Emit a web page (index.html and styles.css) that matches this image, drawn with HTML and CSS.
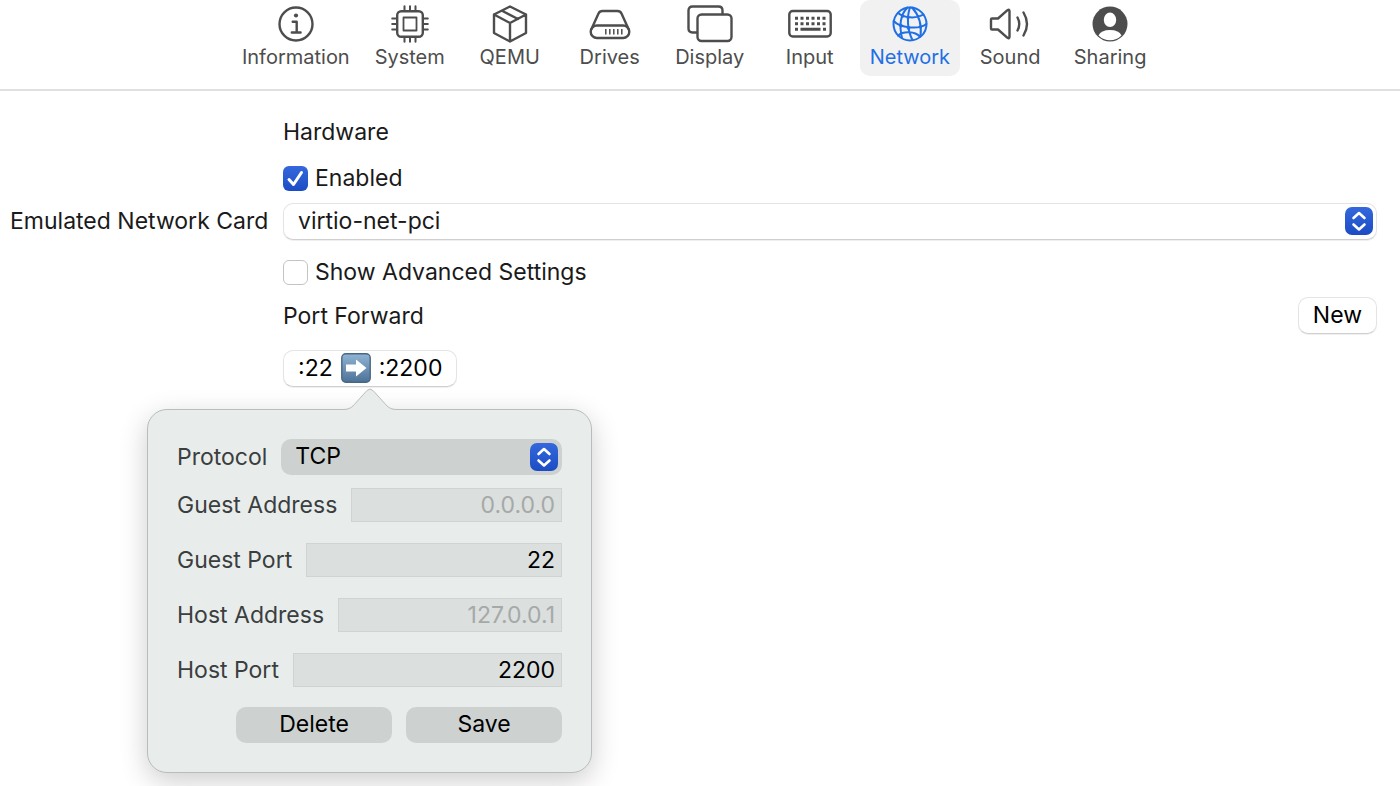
FILE: index.html
```html
<!DOCTYPE html>
<html lang="en">
<head>
<meta charset="utf-8">
<meta name="viewport" content="width=device-width, initial-scale=1">
<title>Network settings</title>
<link rel="stylesheet" href="styles.css">
</head>
<body>
<nav class="toolbar" aria-label="Settings sections">
  <button class="tab" type="button">
    <svg class="tab-icon" viewBox="0 0 48 40" aria-hidden="true"><circle cx="24" cy="20" r="16.5"/><circle class="solid" cx="24" cy="11.5" r="2.1"/><path d="M20.7 17.7h4v10.5M19.8 28.5h8.8"/></svg>
    Information
  </button>
  <button class="tab" type="button">
    <svg class="tab-icon" viewBox="0 0 48 40" aria-hidden="true"><rect x="11.2" y="7.2" width="25.6" height="25.6" rx="4"/><rect x="17.5" y="13.5" width="13" height="13" stroke-width="1.8"/><path d="M18.5 6V2.2M24 6V2.2M29.5 6V2.2M18.5 34v3.8M24 34v3.8M29.5 34v3.8M10 14.5H6.2M10 20H6.2M10 25.5H6.2M38 14.5h3.8M38 20h3.8M38 25.5h3.8" stroke-width="2"/></svg>
    System
  </button>
  <button class="tab" type="button">
    <svg class="tab-icon" viewBox="0 0 48 40" aria-hidden="true"><path d="M24 2.5L40 10.5V29L24 37.5L8 29V10.5ZM8 10.5L24 19L40 10.5M24 19V37.5M16 6.7L32 15"/></svg>
    QEMU
  </button>
  <button class="tab" type="button">
    <svg class="tab-icon" viewBox="0 0 48 40" aria-hidden="true"><rect x="4.7" y="21.5" width="38.6" height="12.5" rx="6.2"/><path d="M5.5 25L12.5 9.5Q13.7 7 16.5 7H31.5Q34.3 7 35.5 9.5L42.5 25"/><path d="M19.8 25v5.5M23.8 25v5.5M27.8 25v5.5M31.8 25v5.5M35.8 25v5.5" stroke-width="1.5" stroke-linecap="butt"/></svg>
    Drives
  </button>
  <button class="tab" type="button">
    <svg class="tab-icon" viewBox="0 0 48 40" aria-hidden="true"><path d="M11 28.5H6.5Q2.5 28.5 2.5 24.5V6.5Q2.5 2.5 6.5 2.5H32.5Q36.5 2.5 36.5 6.5V10"/><rect x="11.5" y="10.5" width="34" height="26.5" rx="4"/></svg>
    Display
  </button>
  <button class="tab" type="button">
    <svg class="tab-icon" viewBox="0 0 48 40" aria-hidden="true"><rect x="3.3" y="7" width="41.4" height="25.5" rx="3.5"/><path d="M9 14.2h31M9 19.7h31" stroke-width="3" stroke-linecap="butt" stroke-dasharray="3 2.5"/><path d="M9 25.2h3M14.5 25.2h20M37 25.2h3" stroke-width="3" stroke-linecap="butt"/></svg>
    Input
  </button>
  <button class="tab tab-active" type="button" aria-current="page">
    <svg class="tab-icon" viewBox="0 0 48 40" aria-hidden="true"><g stroke-width="2"><circle cx="24" cy="20" r="16.5"/><path d="M12 9C18 14 30 15 37.5 10.5M7.7 17C14 24 33 26 40.3 20M12 31.5C17 27 29 27 34 32.8M21.5 3.5C15 10 12.5 19 16 34M24 3.5C20.5 13 21.5 27 26.5 36M26 3.5C33 11 36 20 34.5 32"/></g><g class="solid"><circle cx="16.5" cy="12.3" r="1.5"/><circle cx="22" cy="13.6" r="1.5"/><circle cx="15" cy="21.8" r="1.7"/><circle cx="22.5" cy="23.8" r="1.9"/><circle cx="34.3" cy="23" r="1.7"/></g></svg>
    Network
  </button>
  <button class="tab" type="button">
    <svg class="tab-icon" viewBox="0 0 48 40" aria-hidden="true"><path d="M5 15.5Q5 14.5 6 14.5H12L21.5 6.2Q23.5 5 23.5 7.2V32.8Q23.5 35 21.5 33.8L12 25.5H6Q5 25.5 5 24.5Z"/><path d="M31.5 13.5Q35 20 31.5 26.5M37.5 8.5Q44.5 20 37.5 31.5"/></svg>
    Sound
  </button>
  <button class="tab" type="button">
    <svg class="tab-icon" viewBox="0 0 48 40" aria-hidden="true"><circle class="solid" cx="24" cy="20" r="17.5"/><ellipse class="cutout" cx="24" cy="15.8" rx="6.2" ry="7.2"/><path class="cutout" d="M12.5 31.5Q15 26 24 26T35.5 31.5A16.3 16.3 0 0 1 12.5 31.5Z"/></svg>
    Sharing
  </button>
</nav>

<main class="settings">
  <h2 class="heading">Hardware</h2>
  <label class="check-row"><input class="check" type="checkbox" checked>Enabled</label>

  <label class="row-label" for="card">Emulated Network Card</label>
  <div class="picker">
    <select class="picker-select" id="card"><option>virtio-net-pci</option></select>
    <svg class="picker-knob" viewBox="0 0 28 28" aria-hidden="true"><path d="M8.5 11L14 6L19.5 11M8.5 17.5L14 22.5L19.5 17.5"/></svg>
  </div>

  <label class="check-row"><input class="check" type="checkbox">Show Advanced Settings</label>

  <div class="forward-head">
    <h2 class="heading">Port Forward</h2>
    <button class="button" type="button">New</button>
  </div>

  <button class="button forward-rule" type="button">
    :22
    <svg class="arrow-badge" viewBox="0 0 30 30" role="img" aria-label="to">
      <defs><linearGradient id="badge" x2="0" y2="1"><stop offset="0" stop-color="#91b4d3"/><stop offset="1" stop-color="#4d7298"/></linearGradient></defs>
      <rect x=".8" y=".8" width="28.4" height="28.4" rx="4" fill="url(#badge)" stroke="#486781" stroke-width="1.4"/>
      <path d="M5 11.5H15V6.5L25.5 15L15 23.5V18.5H5Z" fill="#fff"/>
    </svg>
    :2200
  </button>

  <section class="rule-editor" aria-label="Port forward rule">
    <svg class="editor-arrow" viewBox="0 0 54 23" aria-hidden="true"><path class="arrow-fill" d="M0 23V21.5C8 21.5 10 18 14 13.5L24 2.5Q27 -.5 30 2.5L40 13.5C44 18 46 21.5 54 21.5V23Z"/><path class="arrow-line" d="M0 21.5C8 21.5 10 18 14 13.5L24 2.5Q27 -.5 30 2.5L40 13.5C44 18 46 21.5 54 21.5"/></svg>
    <div class="field-row">
      <label for="protocol">Protocol</label>
      <div class="picker picker-filled">
        <select class="picker-select" id="protocol"><option>TCP</option></select>
        <svg class="picker-knob" viewBox="0 0 28 28" aria-hidden="true"><path d="M8.5 11L14 6L19.5 11M8.5 17.5L14 22.5L19.5 17.5"/></svg>
      </div>
    </div>
    <div class="fields">
      <div class="field-row"><label for="guest-address">Guest Address</label><input class="field" id="guest-address" type="text" placeholder="0.0.0.0"></div>
      <div class="field-row"><label for="guest-port">Guest Port</label><input class="field" id="guest-port" type="text" value="22"></div>
      <div class="field-row"><label for="host-address">Host Address</label><input class="field" id="host-address" type="text" placeholder="127.0.0.1"></div>
      <div class="field-row"><label for="host-port">Host Port</label><input class="field" id="host-port" type="text" value="2200"></div>
    </div>
    <div class="actions">
      <button class="button button-filled" type="button">Delete</button>
      <button class="button button-filled" type="button">Save</button>
    </div>
  </section>
</main>
</body>
</html>
```
FILE: styles.css
```css
* { box-sizing: border-box; }

body {
  margin: 0;
  background: #fff;
  color: #1a1a1a;
  font: 23px/28px Inter, "Liberation Sans", sans-serif;
}

button, input, select { font: inherit; color: inherit; }

/* Toolbar */
.toolbar {
  display: flex;
  justify-content: center;
  padding: 0 8px 13px 0;
  border-bottom: 2px solid #e0e0e0;
}

.tab {
  display: flex;
  flex-direction: column;
  align-items: center;
  min-width: 100px;
  height: 76px;
  padding: 4px 10px 0;
  border: 0;
  border-radius: 10px;
  background: none;
  color: #4d4d4d;
  font-size: 20px;
  line-height: 26px;
}

.tab-icon {
  width: 48px;
  height: 40px;
  fill: none;
  stroke: currentColor;
  stroke-width: 2.4;
  stroke-linecap: round;
  stroke-linejoin: round;
}

.tab-icon .solid { fill: currentColor; stroke: none; }
.tab-icon .cutout { fill: #fff; stroke: none; }
.tab-active { background: #f1f1f1; color: #1f6fe5; }

/* Form */
.settings {
  display: grid;
  grid-template-columns: 258px 1fr;
  column-gap: 15px;
  align-items: center;
  padding: 27px 23px 0 10px;
}

.heading { grid-column: 2; margin: 0; font-size: inherit; font-weight: 400; }

.check-row {
  grid-column: 2;
  justify-self: start;
  display: flex;
  align-items: center;
  gap: 7px;
  margin: 18px 0 11px;
}

.check {
  appearance: none;
  width: 25px;
  height: 25px;
  margin: 0;
  border: 1px solid #c4c4c4;
  border-radius: 6px;
  background: #fff;
}

.check:checked {
  border: 0;
  background: url("data:image/svg+xml,%3Csvg xmlns='http://www.w3.org/2000/svg' viewBox='0 0 25 25'%3E%3Cpath d='M6 13.5l4.5 5L18.5 6.5' fill='none' stroke='white' stroke-width='3' stroke-linecap='round' stroke-linejoin='round'/%3E%3C/svg%3E"), linear-gradient(#3568dc, #1c4cc4);
}

.row-label { padding-bottom: 2px; text-align: right; white-space: nowrap; }

.picker { position: relative; flex: 1; min-width: 0; }

.picker-select {
  display: block;
  appearance: none;
  width: 100%;
  height: 37px;
  padding: 0 40px 2px 14px;
  border: 1px solid #e4e4e4;
  border-bottom-color: #cfcfcf;
  border-radius: 10px;
  background: #fff;
  box-shadow: 0 1px 1px #0001;
}

.picker-knob {
  position: absolute;
  top: 4px;
  right: 4px;
  width: 28px;
  height: 28px;
  border-radius: 7px;
  background: linear-gradient(#3568dc, #1c4cc4);
  fill: none;
  stroke: #fff;
  stroke-width: 2.6;
  stroke-linecap: round;
  stroke-linejoin: round;
  pointer-events: none;
}

.forward-head {
  grid-column: 2;
  display: flex;
  justify-content: space-between;
  align-items: center;
}

.button {
  height: 37px;
  padding: 0 14px 2px;
  border: 1px solid #e4e4e4;
  border-bottom-color: #cfcfcf;
  border-radius: 10px;
  background: #fff;
  box-shadow: 0 1px 1px #0001;
  color: #000;
}

.forward-rule {
  grid-column: 2;
  justify-self: start;
  display: flex;
  align-items: center;
  gap: 8px;
  margin-top: 16px;
}

.arrow-badge { width: 30px; height: 30px; }

/* Rule editor, opened below its rule */
.rule-editor {
  grid-column: 1 / -1;
  position: relative;
  width: 445px;
  margin: 22px 0 13px 137px;
  padding: 29px;
  border: 1px solid #b9bcbc;
  border-radius: 20px;
  background: #e8edec;
  box-shadow: 0 8px 28px #0003;
  color: #3b3e3e;
}

.editor-arrow {
  position: absolute;
  top: -22px;
  left: calc(50% - 27px);
  width: 54px;
  height: 23px;
}

.arrow-fill { fill: #e8edec; }
.arrow-line { fill: none; stroke: #b9bcbc; }

.field-row { display: flex; align-items: center; gap: 14px; white-space: nowrap; }

.fields {
  display: grid;
  grid-template-columns: minmax(0, 1fr);
  gap: 21px;
  margin: 13px 0 20px;
}

.field {
  flex: 1;
  min-width: 0;
  height: 34px;
  padding: 0 6px 1px;
  border: 1px solid #cfd3d2;
  border-radius: 0;
  background: #dbdfde;
  color: #000;
  text-align: right;
}

.field::placeholder { color: #a5a9a8; opacity: 1; }

.picker-filled .picker-select,
.button-filled {
  height: 36px;
  border: 0;
  background: #cdd2d1;
  box-shadow: none;
  color: #000;
}

.actions { display: flex; justify-content: flex-end; gap: 14px; }
.button-filled { width: 156px; }
```
